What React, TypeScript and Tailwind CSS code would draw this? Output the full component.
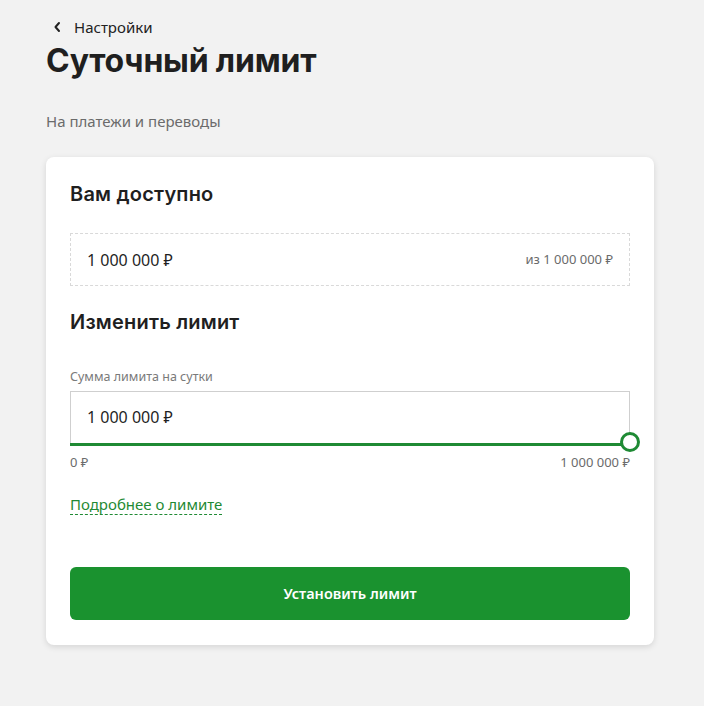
import React from "react";

export default function App() {
  return (
    <div className="min-h-[706px] w-full bg-[#f2f2f2] pt-[17px]" style={{ fontFamily: '"Noto Sans", "Open Sans", sans-serif' }}>
      <div className="px-[46px]">
        <div className="flex h-[20px] items-center text-[#222] ">
          <svg width="20" height="20" viewBox="0 0 20 20" className="ml-[2px]">
            <path d="M11 6 L7.5 10 L11 14" fill="none" stroke="#222" strokeWidth="2" strokeLinecap="round" strokeLinejoin="round" />
          </svg>
          <span className="ml-[6px] text-[15px]">Настройки</span>
        </div>
        <h1 className="mt-[4px] text-[32px] font-bold leading-[40px] tracking-[-0.2px] text-[#1f1f1f]" style={{ fontFamily: 'Inter, sans-serif' }}>
          Суточный лимит
        </h1>
        <p className="mt-[30px] text-[15px] leading-[20px] text-[#6b6b6b]">На платежи и переводы</p>
      </div>
      <div className="ml-[46px] mt-[26px] w-[608px] rounded-[8px] bg-white px-[24px] pb-[25px] pt-[23px] shadow-[0_2px_6px_rgba(0,0,0,0.12)]">
        <h2 className="text-[20px] font-semibold leading-[28px] tracking-[0.2px] text-[#1f1f1f]" style={{ fontFamily: 'Inter, sans-serif' }}>Вам доступно</h2>
        <div className="mt-[25px] flex h-[53px] items-center justify-between border border-dashed border-[#d9d9d9] px-[16px]">
          <span className="text-[16px] text-[#1f1f1f]">1 000 000 ₽</span>
          <span className="text-[13px] text-[#6b6b6b]">из 1 000 000 ₽</span>
        </div>
        <h2 className="mt-[22px] text-[20px] font-semibold leading-[28px] tracking-[0.2px] text-[#1f1f1f]" style={{ fontFamily: 'Inter, sans-serif' }}>Изменить лимит</h2>
        <div className="mt-[33px] text-[12.5px] leading-[16px] text-[#7a7a7a]">Сумма лимита на сутки</div>
        <div className="relative mt-[6px]">
          <div className="flex h-[52px] items-center border border-b-0 border-[#cfcfcf] px-[16px] pb-[1px]">
            <span className="text-[16px] text-[#1f1f1f]">1 000 000 ₽</span>
          </div>
          <div className="h-[3px] bg-[#1f8a34]"></div>
          <div className="absolute right-[-10px] top-[41px] h-[20px] w-[20px] rounded-full border-[3px] border-[#1f8a34] bg-white"></div>
        </div>
        <div className="mt-[8px] flex justify-between text-[13px] leading-[16px] text-[#6b6b6b]">
          <span>0 ₽</span>
          <span>1 000 000 ₽</span>
        </div>
        <div className="mt-[22px]">
          <span className="border-b border-dashed border-[#1f8a34] text-[15px] leading-[20px] text-[#1f8a34]">Подробнее о лимите</span>
        </div>
        <button className="mt-[51px] flex h-[53px] w-full items-center justify-center rounded-[6px] bg-[#1a922f] text-[14.5px] font-semibold text-white">
          Установить лимит
        </button>
      </div>
    </div>
  );
}
